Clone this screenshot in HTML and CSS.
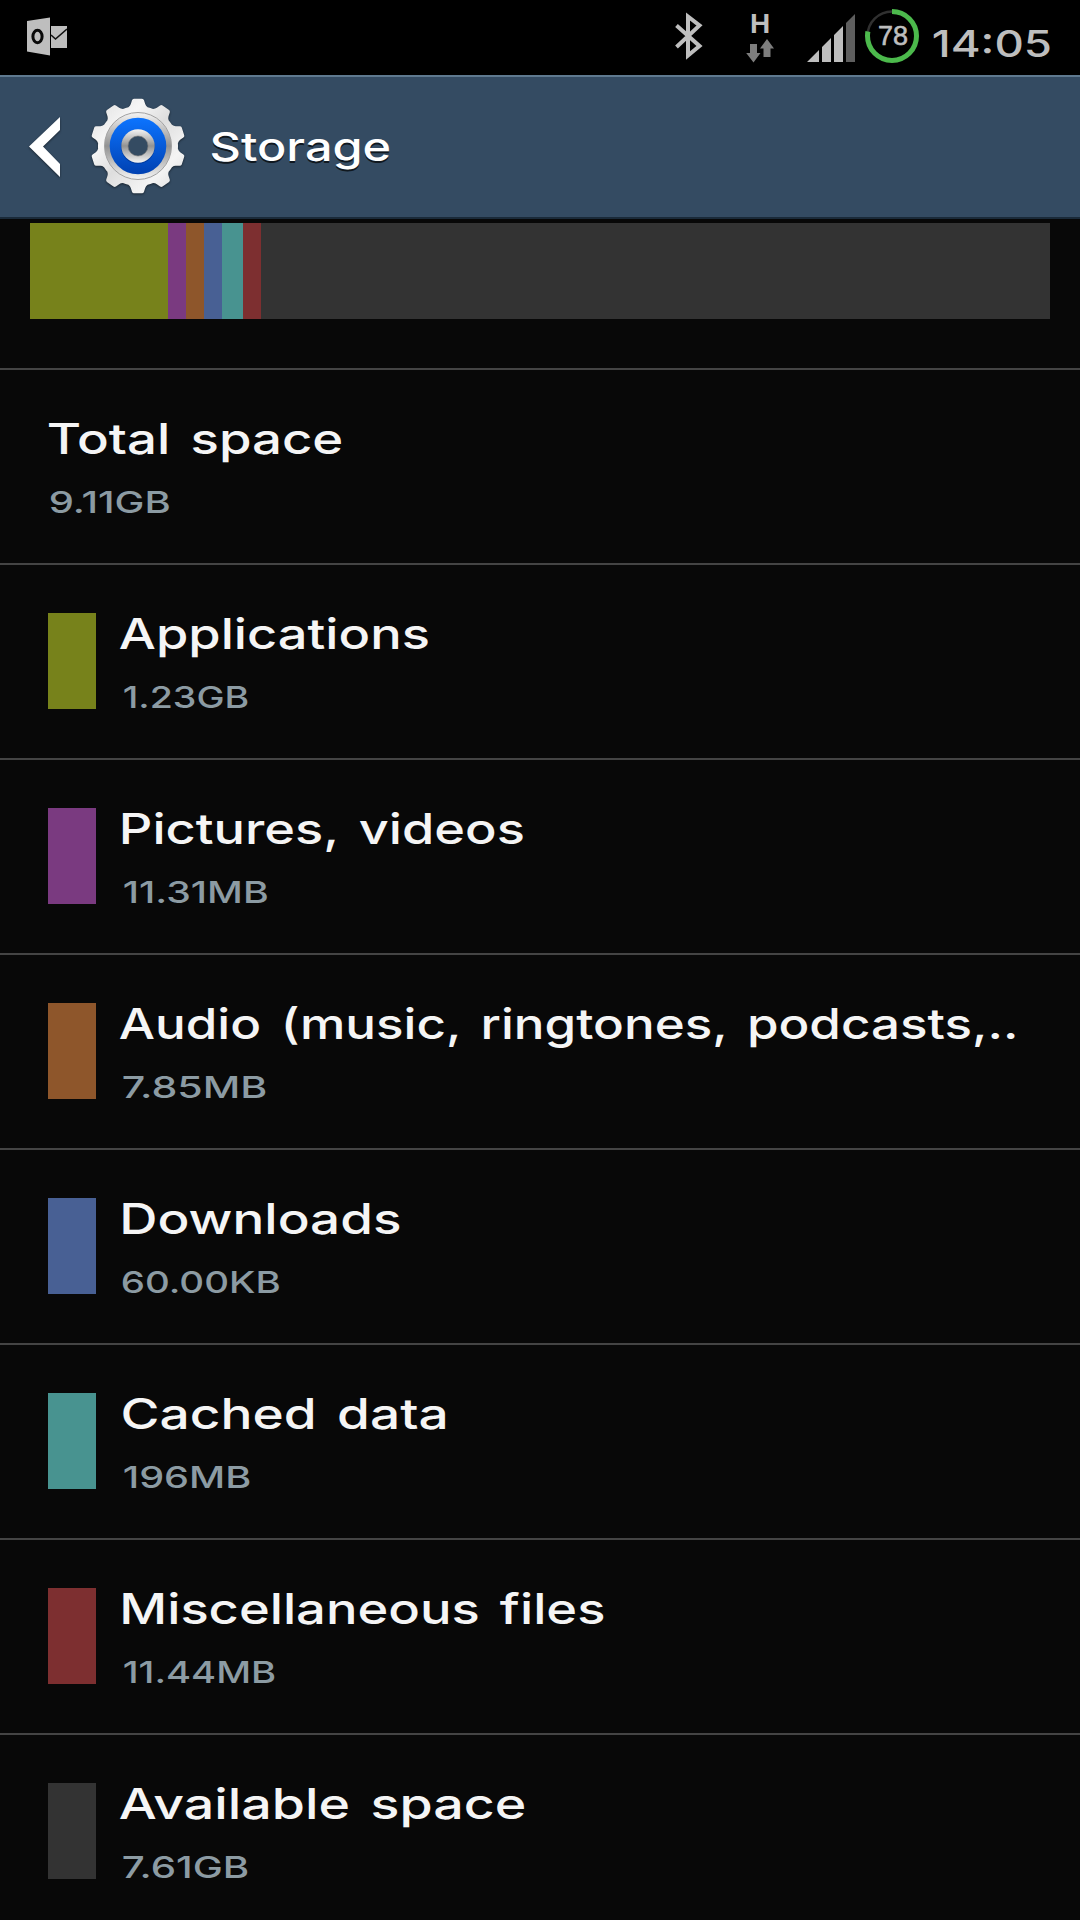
FILE: index.html
```html
<!DOCTYPE html>
<html lang="en">
<head>
  <meta charset="utf-8" />
  <meta name="viewport" content="width=device-width, initial-scale=1.0" />
  <title>Storage</title>
  <link rel="stylesheet" href="styles.css">
</head>

<body>
  <div class="status-bar">
    <svg class="mail-icon" width="40" height="40" viewBox="0 0 40 40">
      <path fill="#bebebe" d="M0 4 23 .5V38.500L0 34.500Z" />
      <path fill="#bebebe" d="M24 9h16v22H24z" />
      <path fill="none" stroke="#111" stroke-width="1.600" d="M24 18l4.500 4L40 12" />
      <ellipse cx="10.500" cy="19.500" rx="4.600" ry="6.300" fill="none" stroke="#0a0a0a" stroke-width="3" />
    </svg>

    <svg class="bluetooth" width="28" height="48" viewBox="0 0 28 48">
      <path fill="none" stroke="#bebebe" stroke-width="4" d="M1.500 13.500 24.500 34 13 43.500V4.500L24.500 13.500 1.500 35" />
    </svg>

    <div class="network">
      <span class="network-type">H</span>
      <svg width="28" height="24" viewBox="0 0 28 24">
        <path fill="#7d7d7d" d="M4 5h7v9h3.500L7.500 23.500.200 14H4zM17.500 18V9.500H14L21 0l7 9.500h-3.500V18z" />
      </svg>
    </div>

    <svg class="signal" width="48" height="48" viewBox="0 0 48 48">
      <path fill="#bebebe" d="M0 48 12 36V48zM15 33l9-9V48h-9zM27 21l9-9V48h-9z" />
      <path fill="#5e5e5e" d="M39 9l9-9V48h-9z" />
    </svg>

    <div class="battery">
      <svg width="54" height="54" viewBox="0 0 54 54">
        <circle cx="27" cy="27" r="24.500" fill="none" stroke="#303030" stroke-width="2.500" />
        <circle cx="27" cy="27" r="24.500" fill="none" stroke="#4cb94c" stroke-width="5" pathLength="100" stroke-dasharray="78 22" transform="rotate(-90 27 27)" />
      </svg>
      <span class="battery-level">78</span>
    </div>

    <div class="clock"><span class="fit" data-width="117">14:05</span></div>
  </div>

  <div class="action-bar">
    <svg class="back" width="31" height="60" viewBox="0 0 31 60">
      <path fill="#fff" d="M0 29.500 31 0v13L14 29.500 31 47v13z" />
    </svg>

    <svg class="gear" width="96" height="96" viewBox="-48 -48 96 96">
      <defs>
        <linearGradient id="metal" x1="0" y1="0" x2="1" y2="1">
          <stop offset="0" stop-color="#dcdcdc" />
          <stop offset=".3" stop-color="#f6f6f6" />
          <stop offset=".5" stop-color="#dedede" />
          <stop offset=".75" stop-color="#f4f4f4" />
          <stop offset="1" stop-color="#d8d8d8" />
        </linearGradient>
        <linearGradient id="ring" x1="0" y1="0" x2="0" y2="1">
          <stop offset="0" stop-color="#f4f4f4" />
          <stop offset=".5" stop-color="#929292" />
          <stop offset="1" stop-color="#f4f4f4" />
        </linearGradient>
        <linearGradient id="blue" x1="0" y1="0" x2="0" y2="1">
          <stop offset="0" stop-color="#0c74ff" />
          <stop offset="1" stop-color="#0041b2" />
        </linearGradient>
        <path id="tooth" d="M-11-38Q-8-39.500-7.200-42L-6-45.800Q-5.500-47.300-4-47.300H4Q5.500-47.300 6-45.800L7.200-42Q8-39.500 11-38V-30H-11Z" />
        <clipPath id="gear-shape">
          <circle r="40" />
          <use href="#tooth" />
          <use href="#tooth" transform="rotate(36)" />
          <use href="#tooth" transform="rotate(72)" />
          <use href="#tooth" transform="rotate(108)" />
          <use href="#tooth" transform="rotate(144)" />
          <use href="#tooth" transform="rotate(180)" />
          <use href="#tooth" transform="rotate(216)" />
          <use href="#tooth" transform="rotate(252)" />
          <use href="#tooth" transform="rotate(288)" />
          <use href="#tooth" transform="rotate(324)" />
        </clipPath>
      </defs>
      <rect x="-48" y="-48" width="96" height="96" fill="url(#metal)" clip-path="url(#gear-shape)" />
      <circle r="33.500" fill="url(#ring)" stroke="#a2a2a2" />
      <circle r="28.300" fill="url(#blue)" />
      <circle cy="1" r="16.800" fill="#003a9c" />
      <circle r="16.700" fill="url(#ring)" />
      <circle r="10" fill="#344b62" stroke="#777" stroke-width=".6" />
    </svg>

    <h1><span class="fit" data-width="178">Storage</span></h1>
  </div>

  <div class="usage">
    <div class="usage-bar">
      <div class="apps" style="width: 138px"></div>
      <div class="pictures" style="width: 18px"></div>
      <div class="audio" style="width: 18px"></div>
      <div class="downloads" style="width: 18px"></div>
      <div class="cached" style="width: 21px"></div>
      <div class="misc" style="width: 18px"></div>
    </div>
  </div>

  <ul class="list">
    <li>
      <div class="text">
        <h2><span class="fit" data-width="294">Total space</span></h2>
        <p><span class="fit" data-left="2" data-width="119.500">9.11GB</span></p>
      </div>
    </li>
    <li>
      <div class="swatch apps"></div>
      <div class="text">
        <h2><span class="fit" data-width="307.500">Applications</span></h2>
        <p><span class="fit" data-left="4" data-width="124">1.23GB</span></p>
      </div>
    </li>
    <li>
      <div class="swatch pictures"></div>
      <div class="text">
        <h2><span class="fit" data-left="2.500" data-width="400.500">Pictures, videos</span></h2>
        <p><span class="fit" data-left="4" data-width="143.500">11.31MB</span></p>
      </div>
    </li>
    <li>
      <div class="swatch audio"></div>
      <div class="text">
        <h2><span class="fit" data-width="896">Audio (music, ringtones, podcasts,..</span></h2>
        <p><span class="fit" data-left="3" data-width="143">7.85MB</span></p>
      </div>
    </li>
    <li>
      <div class="swatch downloads"></div>
      <div class="text">
        <h2><span class="fit" data-left="3" data-width="276">Downloads</span></h2>
        <p><span class="fit" data-left="2" data-width="157.500">60.00KB</span></p>
      </div>
    </li>
    <li>
      <div class="swatch cached"></div>
      <div class="text">
        <h2><span class="fit" data-left="3" data-width="323">Cached data</span></h2>
        <p><span class="fit" data-left="4" data-width="126">196MB</span></p>
      </div>
    </li>
    <li>
      <div class="swatch misc"></div>
      <div class="text">
        <h2><span class="fit" data-left="3" data-width="480">Miscellaneous files</span></h2>
        <p><span class="fit" data-left="4" data-width="151">11.44MB</span></p>
      </div>
    </li>
    <li>
      <div class="swatch available"></div>
      <div class="text">
        <h2><span class="fit" data-width="405">Available space</span></h2>
        <p><span class="fit" data-left="3" data-width="125">7.61GB</span></p>
      </div>
    </li>
  </ul>

  <script src="script.js"></script>
</body>
</html>
```
FILE: styles.css
```css
* {
  box-sizing: border-box;
}

body {
  margin: 0;
  width: 1080px;
  height: 1920px;
  overflow: hidden;
  background: #080808;
  color: #f5f5f5;
  font-family: Inter, "DejaVu Sans", sans-serif;
}

svg {
  display: block;
  flex: none;
}

h1, h2, p {
  margin: 0;
  font-weight: 500;
  white-space: nowrap;
}

/* stretched to the wide letterforms by script.js */
.fit {
  display: inline-block;
  transform-origin: 0 50%;
}

/* status bar */
.status-bar {
  display: flex;
  align-items: flex-start;
  height: 75px;
  padding: 0 30px 0 27px;
  background: #000;
  color: #bebebe;
}

.mail-icon {
  margin-top: 17px;
  margin-right: auto;
}

.bluetooth {
  margin-top: 12px;
  margin-right: 43px;
}

.network {
  width: 28px;
  margin-top: 9px;
  margin-right: 33px;
}

.network-type {
  display: block;
  height: 30px;
  line-height: 29px;
  text-align: center;
  font-family: "Liberation Sans", sans-serif;
  font-weight: bold;
  font-size: 28px;
}

.signal {
  margin-top: 14px;
  margin-right: 10px;
}

.battery {
  position: relative;
  margin-top: 9px;
  margin-right: 14px;
}

.battery-level {
  position: absolute;
  inset: 0;
  padding-left: 2px;
  line-height: 54px;
  text-align: center;
  font-family: "Liberation Sans", sans-serif;
  font-size: 27px;
  -webkit-text-stroke: .6px #bebebe;
}

.clock {
  width: 117px;
  margin-top: 18px;
  line-height: 52px;
  font-size: 36.5px;
  font-weight: 500;
  white-space: nowrap;
}

/* title bar */
.action-bar {
  display: flex;
  align-items: center;
  height: 144px;
  padding-left: 29px;
  background: #344b62;
  border-top: 2px solid #5f7a90;
  border-bottom: 2px solid #1a2a39;
}

.back,
.gear {
  filter: drop-shadow(0 1px 1px rgba(0, 0, 0, .5));
}

.gear {
  margin-left: 30px;
  margin-right: 26px;
  margin-bottom: 2px;
}

h1 {
  font-size: 39px;
  line-height: 60px;
  color: #fff;
  text-shadow: 0 2px 0 #10181f;
}

/* usage graph */
.usage {
  height: 149px;
  padding: 4px 30px 0;
}

.usage-bar {
  display: flex;
  height: 96px;
  background: #333;
}

.apps { background: #77821b; }
.pictures { background: #7a3a80; }
.audio { background: #8e562b; }
.downloads { background: #486094; }
.cached { background: #489390; }
.misc { background: #7d2f30; }
.available { background: #333; }

/* list */
.list {
  margin: 0;
  padding: 0;
  list-style: none;
}

.list li {
  display: flex;
  align-items: center;
  gap: 24px;
  height: 195px;
  padding-left: 48px;
  border-top: 2px solid #444;
}

.swatch {
  width: 48px;
  height: 96px;
  margin-bottom: 1px;
}

.text {
  display: flex;
  flex-direction: column;
  gap: 11px;
}

h2 {
  font-size: 42.6px;
  line-height: 60px;
  word-spacing: 5px;
}

p {
  font-size: 30.3px;
  line-height: 44px;
  color: #8c9ba3;
}
```
FILE: script.js
```js
// scale each label so its glyphs span data-width, starting at data-left
const ctx = document.createElement("canvas").getContext("2d");

document.querySelectorAll(".fit").forEach((el) => {
  const style = getComputedStyle(el);
  ctx.font = `${style.fontWeight} ${style.fontSize} ${style.fontFamily}`;
  ctx.wordSpacing = style.wordSpacing;
  const m = ctx.measureText(el.textContent);
  const left = Number(el.dataset.left || 0);
  const scale = el.dataset.width / (m.actualBoundingBoxLeft + m.actualBoundingBoxRight);
  const shift = left + m.actualBoundingBoxLeft * scale;
  el.style.transform = `translateX(${shift}px) scaleX(${scale})`;
});
```
